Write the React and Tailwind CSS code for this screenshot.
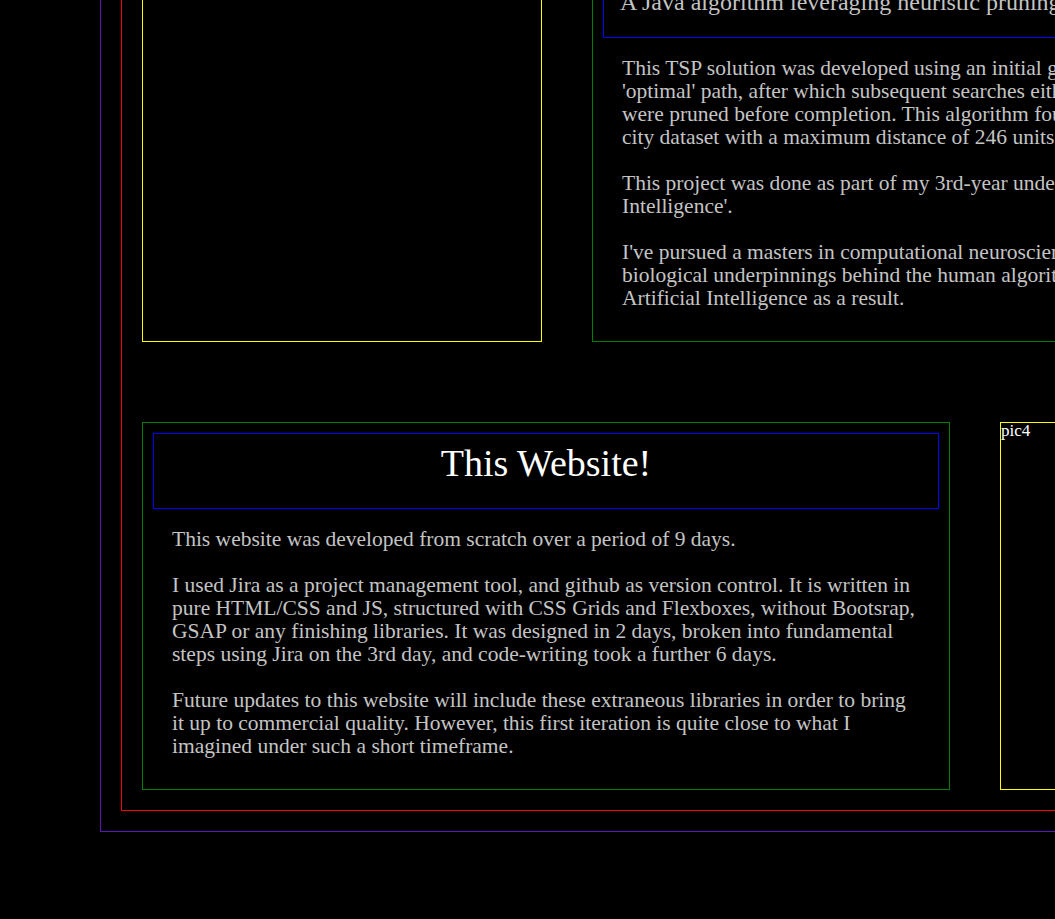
import React from "react";

const serif = "font-['Liberation_Serif','Times_New_Roman',serif]";

function Lines({ lines }) {
  return (
    <div className="whitespace-nowrap text-[21.5px] leading-[23px] text-[#c4c4c4]">
      {lines.map((l, i) =>
        l === "" ? (
          <div key={i} className="h-[23px]" />
        ) : (
          <div key={i}>{l}</div>
        )
      )}
    </div>
  );
}

const tspLines = [
  "This TSP solution was developed using an initial greedy search to find an",
  "'optimal' path, after which subsequent searches either improved on it or",
  "were pruned before completion. This algorithm found a path through a 100-",
  "city dataset with a maximum distance of 246 units.",
  "",
  "This project was done as part of my 3rd-year undergraduate module 'Artificial",
  "Intelligence'.",
  "",
  "I've pursued a masters in computational neuroscience to further explore the",
  "biological underpinnings behind the human algorithm, and have taken up",
  "Artificial Intelligence as a result.",
];

const siteLines = [
  "This website was developed from scratch over a period of 9 days.",
  "",
  "I used Jira as a project management tool, and github as version control. It is written in",
  "pure HTML/CSS and JS, structured with CSS Grids and Flexboxes, without Bootsrap,",
  "GSAP or any finishing libraries. It was designed in 2 days, broken into fundamental",
  "steps using Jira on the 3rd day, and code-writing took a further 6 days.",
  "",
  "Future updates to this website will include these extraneous libraries in order to bring",
  "it up to commercial quality. However, this first iteration is quite close to what I",
  "imagined under such a short timeframe.",
];

export default function App() {
  return (
    <div className={`h-[919px] w-full overflow-hidden bg-black ${serif}`}>
      <div className="ml-[100px] -mt-[119px] w-fit border border-[#5816b2] p-[20px]">
        <div className="w-fit border border-[#ff0000] p-[20px]">
          <div className="flex flex-col gap-[80px]">
            {/* Row 1 */}
            <div className="flex gap-[50px]">
              <div className="w-[400px] shrink-0 border border-[#ffff00]">
                <div className="text-[17px] leading-[16px] text-white">pic3</div>
              </div>
              <div className="w-[808px] shrink-0 overflow-hidden border border-[#008000]">
                <div className="m-[10px] border border-[#0000ff] px-[16px] pt-[10px] pb-[22px]">
                  <h2 className="text-center text-[38px] leading-[44px] text-white">
                    Travelling Salesman
                  </h2>
                  <p className="whitespace-nowrap text-[24px] leading-[26px] text-[#c4c4c4]">
                    A Java algorithm leveraging heuristic pruning to solve the Travelling Salesman Problem
                  </p>
                </div>
                <div className="px-[29px] pt-[9px] pb-[31px]">
                  <Lines lines={tspLines} />
                </div>
              </div>
            </div>
            {/* Row 2 */}
            <div className="flex h-[368px] gap-[50px]">
              <div className="w-[808px] shrink-0 overflow-hidden border border-[#008000]">
                <div className="m-[10px] border border-[#0000ff] pt-[7px] pb-[23px]">
                  <h2 className="text-center text-[38px] leading-[44px] text-white">
                    This Website!
                  </h2>
                </div>
                <div className="px-[29px] pt-[9px]">
                  <Lines lines={siteLines} />
                </div>
              </div>
              <div className="w-[400px] shrink-0 border border-[#ffff00]">
                <div className="text-[17px] leading-[16px] text-white">pic4</div>
              </div>
            </div>
          </div>
        </div>
      </div>
    </div>
  );
}
